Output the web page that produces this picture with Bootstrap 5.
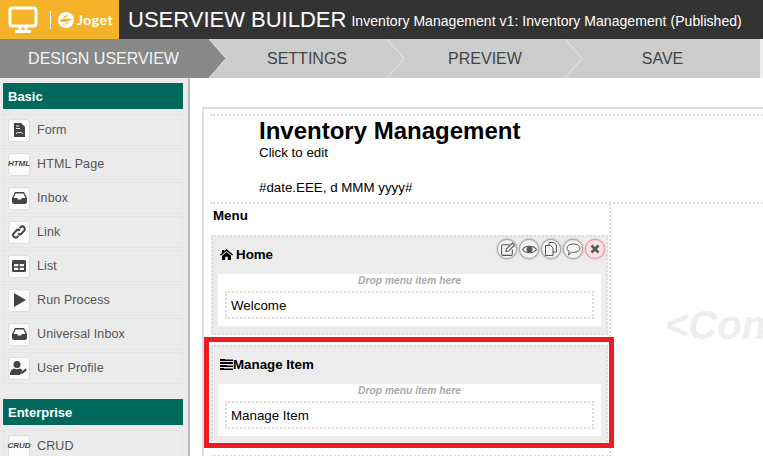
<!DOCTYPE html>
<html lang="en">
<head>
<meta charset="utf-8">
<title>Userview Builder</title>
<link href="https://cdn.jsdelivr.net/npm/bootstrap@5.3.0/dist/css/bootstrap.min.css" rel="stylesheet">
<style>
html,body{height:456px;overflow:hidden;background:#fff}
body{font-family:"Liberation Sans",Arial,sans-serif;font-size:13.33px;color:#000}
.shell{width:763px;height:456px;overflow:hidden}
.topbar{height:39px;background:#333;color:#fff;flex:none}
.brand{width:119px;background:#f5b32a;padding-left:8px;gap:7px;flex:none}
.brand-sep{width:1px;height:18px;background:#fff;margin-left:5px}
.brand-name{font-family:"Lato",sans-serif;font-weight:700;font-size:14px;letter-spacing:.5px;color:#fff;margin-left:-4px}
.bigtitle{font-size:22px;margin-left:9px;line-height:39px;white-space:nowrap}
.subtitle{font-size:14px;letter-spacing:.05px;margin-left:5px;white-space:nowrap;position:relative;top:2px}
.steps{height:39px;background:#ccc;flex:none;font-size:16px;color:#444}
.stp{height:39px;line-height:39px;text-align:center;position:relative;flex:none}
.stp svg{position:absolute;left:100%;top:0}
.stp-active{width:209px;padding-right:2px;background:#888;color:#f4f4f4}
.stp-mid{width:178px;padding-left:18px}
.stp-last{width:195px}
.stp-tail{width:3px;background:#eee}
.palette{width:190px;flex:none;background:#ebebeb;border-right:2px solid #bbb;padding:5px 5px 0 3px}
.pal-head{height:26px;line-height:27px;background:#00695c;color:#fff;font-weight:700;font-size:13px;padding-left:5px}
.pal-list{margin-top:5px}
.pal-item{height:32px;margin-bottom:2px;border:1px dotted #dedede;padding-left:4px;gap:7px;color:#555;font-size:12.5px;letter-spacing:.12px}
.pal-icon{width:22px;height:23px;background:#fbfbfb;border:1px solid #ddd;border-radius:3px;color:#444;flex:none}
.pal-tag{font-size:8px;font-style:italic;font-weight:700;letter-spacing:0;color:#444}
.pal-sec{margin-top:15px}
.stage{padding:29px 0 0 12px;min-width:0}
.frame{border-left:2px solid #ddd;border-top:2px solid #ddd;padding:5px 0 0 6px;height:400px}
.dots-b{border-top:2px dotted #ddd}
.head-zone{height:88px;padding-left:49px}
.app-name{font-size:24px;font-weight:700;line-height:28px;padding-top:1px;margin:0}
.app-line{line-height:14px;margin-top:1px}
.app-date{line-height:14px;margin-top:21px}
.menu-col{width:401px;flex:none;border-right:2px dotted #ddd;position:relative;padding-top:5px;height:260px}
.menu-label{font-weight:700;line-height:14px;padding-left:3px;margin-bottom:12px}
.cat{width:397px;height:100px;margin:0 0 10px 1px;background:#ececec;border:2px dotted #ddd;padding:0 5px;position:relative}
.cat-head{height:37px;padding:0 0 2px 2px;font-weight:700;gap:3px;color:#000}
.cat-glued{margin-left:-3px}
.cat-drop{background:#fff;height:52px;padding:0 7px}
.cat-hint{font-size:10.3px;font-style:italic;font-weight:700;color:#aaa;text-align:center;line-height:13px;padding-bottom:4px}
.cat-item{height:28px;border:2px dotted #ddd;line-height:24px;padding:1px 0 0 4px}
.cat-next{width:397px;margin-left:1px;border-top:2px dotted #ddd}
.tools{position:absolute;top:2px;right:1px}
.tool{width:20px;height:20px;margin-left:2px;border-radius:50%;background:#f4f4f4;border:1px solid #aaa;box-shadow:0 0 2px #888}
.tool-del{background:#f9e3e6;border-color:#f58ba3;box-shadow:0 0 2px #f58ba3}
.annot{position:absolute;left:-6px;top:133px;width:410px;height:111px;border:5px solid #ed1c24;pointer-events:none}
.ghost{font-size:40px;font-weight:700;font-style:italic;color:#eee;white-space:nowrap;padding:98px 0 0 54px;line-height:46px}
</style>
</head>
<body>
<div class="shell d-flex flex-column">
  <div class="topbar d-flex align-items-center">
    <div class="brand h-100 d-flex align-items-center">
      <svg width="30" height="28" viewBox="0 0 30 28" fill="none"><rect x="2" y="2" width="26" height="18" rx="2.5" stroke="#fff" stroke-width="3"/><path d="M12 21v3M18 21v3" stroke="#fff" stroke-width="3"/><rect x="7" y="24" width="16" height="3" rx="1" fill="#fff"/></svg>
      <span class="brand-sep"></span>
      <svg width="16" height="16" viewBox="0 0 16 16"><circle cx="8" cy="8" r="8" fill="#fff"/><path d="M1 9c3-3 7-3 14-2-3 1-5 3-8 3-2 0-4 0-6-1zM11 4C9 2.500 6 3 5 6 7 5 9 4.500 11 4zM4 12c3 1 6 0 8-2-2 .5-5 2-8 2z" fill="#f5b32a"/></svg>
      <span class="brand-name">Joget</span>
    </div>
    <span class="bigtitle">USERVIEW BUILDER</span>
    <span class="subtitle">Inventory Management v1: Inventory Management (Published)</span>
  </div>

  <div class="steps d-flex">
    <div class="stp stp-active">DESIGN USERVIEW
      <svg width="18" height="39" viewBox="0 0 18 39"><path d="M0 0L17 19.500L0 39z" fill="#888"/><path d="M0 0L17 19.500L0 39" fill="none" stroke="#e6e6e6"/></svg>
    </div>
    <div class="stp stp-mid">SETTINGS
      <svg width="18" height="39" viewBox="0 0 18 39"><path d="M0 0L17 19.500L0 39" fill="none" stroke="#e6e6e6"/></svg>
    </div>
    <div class="stp stp-mid">PREVIEW
      <svg width="18" height="39" viewBox="0 0 18 39"><path d="M0 0L17 19.500L0 39" fill="none" stroke="#e6e6e6"/></svg>
    </div>
    <div class="stp stp-last">SAVE</div>
    <div class="stp-tail"></div>
  </div>

  <div class="d-flex flex-grow-1 overflow-hidden">
    <aside class="palette">
      <div class="pal-head">Basic</div>
      <div class="pal-list">
        <div class="pal-item d-flex align-items-center"><span class="pal-icon d-flex align-items-center justify-content-center"><svg width="11" height="14" viewBox="0 0 11 14"><path d="M0 0h7l4 4v10H0z" fill="#444"/><path d="M2 3h3M2 5.500h4M2 10.500c2-2 3 0 4-1s2 1 3 1" stroke="#fbfbfb" stroke-width="1" fill="none"/></svg></span>Form</div>
        <div class="pal-item d-flex align-items-center"><span class="pal-icon d-flex align-items-center justify-content-center pal-tag">HTML</span>HTML Page</div>
        <div class="pal-item d-flex align-items-center"><span class="pal-icon d-flex align-items-center justify-content-center"><svg width="15" height="12" viewBox="0 0 15 12"><path d="M3 0h9l3 6v4a2 2 0 0 1-2 2H2a2 2 0 0 1-2-2V6z" fill="#444"/><path d="M3.600 1.500h7.800l2 4.500H10l-1 1.500H6L5 6H1.600z" fill="#fbfbfb"/></svg></span>Inbox</div>
        <div class="pal-item d-flex align-items-center"><span class="pal-icon d-flex align-items-center justify-content-center"><svg width="14" height="14" viewBox="0 0 14 14" fill="none" stroke="#444" stroke-width="2"><path d="M6 8.500a2.500 2.500 0 0 0 3.500 0l2.500-2.500a2.500 2.500 0 0 0-3.500-3.800L7.500 3"/><path d="M8 5.500a2.500 2.500 0 0 0-3.500 0L2 8a2.500 2.500 0 0 0 3.500 3.800l1-.8"/></svg></span>Link</div>
        <div class="pal-item d-flex align-items-center"><span class="pal-icon d-flex align-items-center justify-content-center"><svg width="14" height="12" viewBox="0 0 14 12"><path d="M1.500 0h11A1.500 1.500 0 0 1 14 1.500v9a1.500 1.500 0 0 1-1.500 1.500h-11A1.500 1.500 0 0 1 0 10.500v-9A1.500 1.500 0 0 1 1.500 0z" fill="#444"/><path d="M2 4h4.300v2.300H2zM7.700 4H12v2.300H7.700zM2 7.700h4.300V10H2zM7.700 7.700H12V10H7.700z" fill="#fbfbfb"/></svg></span>List</div>
        <div class="pal-item d-flex align-items-center"><span class="pal-icon d-flex align-items-center justify-content-center"><svg width="13" height="14" viewBox="0 0 13 14"><path d="M1 0l12 7-12 7z" fill="#444"/></svg></span>Run Process</div>
        <div class="pal-item d-flex align-items-center"><span class="pal-icon d-flex align-items-center justify-content-center"><svg width="15" height="12" viewBox="0 0 15 12"><path d="M3 0h9l3 6v4a2 2 0 0 1-2 2H2a2 2 0 0 1-2-2V6z" fill="#444"/><path d="M3.600 1.500h7.800l2 4.500H10l-1 1.500H6L5 6H1.600z" fill="#fbfbfb"/></svg></span>Universal Inbox</div>
        <div class="pal-item d-flex align-items-center"><span class="pal-icon d-flex align-items-center justify-content-center"><svg width="18" height="14" viewBox="0 0 18 14"><circle cx="7" cy="3.500" r="3.500" fill="#444"/><path d="M0 14c0-4 2-6 4-6.500 2 1 4 1 6 0 1 .3 2 1 2.500 2L10 14z" fill="#444"/><path d="M11 13l.5-2 4-3.500 1.500 1.500-4 3.500z" fill="#444"/></svg></span>User Profile</div>
      </div>
      <div class="pal-head pal-sec">Enterprise</div>
      <div class="pal-list">
        <div class="pal-item d-flex align-items-center"><span class="pal-icon d-flex align-items-center justify-content-center pal-tag">CRUD</span>CRUD</div>
      </div>
    </aside>

    <main class="stage flex-grow-1 overflow-hidden">
      <div class="frame">
        <div class="dots-b head-zone">
          <h1 class="app-name">Inventory Management</h1>
          <div class="app-line">Click to edit</div>
          <div class="app-date">#date.EEE, d MMM yyyy#</div>
        </div>
        <div class="dots-b d-flex">
          <div class="menu-col">
            <div class="menu-label">Menu</div>
            <div class="cat">
              <div class="cat-head d-flex align-items-center"><svg width="13" height="11" viewBox="0 0 13 11"><path d="M6.500 0L13 5.600l-.9 1L6.500 1.900.9 6.600l-.9-1 2-1.700V1h2v1.200z" fill="#000"/><path d="M6.500 3L11 6.800V11H7.800V7.800H5.200V11H2V6.800z" fill="#000"/></svg>Home</div>
              <div class="tools d-flex">
                <span class="tool d-flex align-items-center justify-content-center"><svg width="15" height="15" viewBox="0 0 14 14" fill="none" stroke="#555"><path d="M9 2.500H2.500a1 1 0 0 0-1 1v8a1 1 0 0 0 1 1h8a1 1 0 0 0 1-1V7"/><path d="M5.500 9l.5-2.500L11.500 1l2 2L8 8.500z"/></svg></span>
                <span class="tool d-flex align-items-center justify-content-center"><svg width="15" height="11" viewBox="0 0 14 10"><path d="M.5 5C3 1 11 1 13.500 5 11 9 3 9 .5 5z" fill="none" stroke="#555"/><circle cx="7" cy="5" r="2.800" fill="#555"/></svg></span>
                <span class="tool d-flex align-items-center justify-content-center"><svg width="12" height="14" viewBox="0 0 12 14" fill="none" stroke="#555"><path d="M4 3V.5h5l2.500 2.500v7H8"/><path d="M.5 3.500H5.500L8 6v7.500H.5z"/></svg></span>
                <span class="tool d-flex align-items-center justify-content-center"><svg width="15" height="13" viewBox="0 0 15 13"><path d="M7.500 1c3.600 0 6.500 1.800 6.500 4.200S11.100 9.400 7.500 9.400c-.7 0-1.300 0-1.900-.2L2.500 12l.8-3.600C1.800 7.700 1 6.500 1 5.200 1 2.800 3.900 1 7.500 1z" fill="none" stroke="#555"/></svg></span>
                <span class="tool tool-del d-flex align-items-center justify-content-center"><svg width="10" height="10" viewBox="0 0 10 10"><path d="M1.500 1.500l7 7M8.500 1.500l-7 7" stroke="#555" stroke-width="2.600"/></svg></span>
              </div>
              <div class="cat-drop">
                <div class="cat-hint">Drop menu item here</div>
                <div class="cat-item">Welcome</div>
              </div>
            </div>
            <div class="cat">
              <div class="cat-head d-flex align-items-center"><svg width="13" height="11" viewBox="0 0 13 11"><path d="M0 0h13v2H0zM0 3h13v2H0zM0 6h13v2H0zM0 9h13v2H0z" fill="#000"/><path d="M5 0h8v1H5zM7 6h6v1H7zM4 9h9v1H4z" fill="#777"/></svg><span class="cat-glued">Manage Item</span></div>
              <div class="cat-drop">
                <div class="cat-hint">Drop menu item here</div>
                <div class="cat-item">Manage Item</div>
              </div>
            </div>
            <div class="cat-next"></div>
            <div class="annot"></div>
          </div>
          <div class="ghost">&lt;Content&gt;</div>
        </div>
      </div>
    </main>
  </div>
</div>
<script src="https://cdn.jsdelivr.net/npm/bootstrap@5.3.0/dist/js/bootstrap.bundle.min.js"></script>
</body>
</html>
